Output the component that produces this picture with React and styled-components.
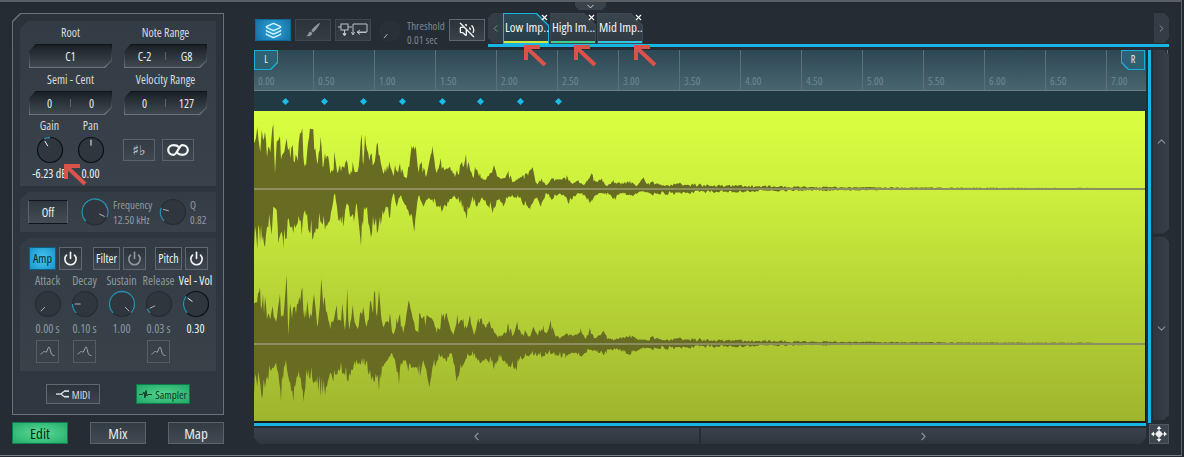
import React from "react";
import styled, { createGlobalStyle, css } from "styled-components";
import { Power, Layers, VolumeOff, ChevronLeft, ChevronRight, ChevronUp, ChevronDown, X } from "lucide-react";

const GlobalStyle = createGlobalStyle`
  html, body { margin: 0; padding: 0; background: #24292f; }
  * { box-sizing: border-box; }
  body { font-family: "Open Sans", "Roboto", "Liberation Sans", sans-serif; font-stretch: 75%; }
`;

const chamfer = (tl, tr, br, bl) => css`
  clip-path: polygon(
    ${tl}px 0, calc(100% - ${tr}px) 0, 100% ${tr}px, 100% calc(100% - ${br}px),
    calc(100% - ${br}px) 100%, ${bl}px 100%, 0 calc(100% - ${bl}px), 0 ${tl}px
  );
`;

const Frame = styled.div`
  position: relative;
  width: 1182px;
  height: 456px;
  border-top: 2px solid #5a5f65;
  border-right: 1px solid #5a5f65;
  border-bottom: 1px solid #7a7f84;
  background: #262c34;
  padding: 11px 12px 0 12px;
  display: grid;
  grid-template-columns: 212px 915px;
  column-gap: 30px;
  overflow: hidden;
`;

/* left column */
const LeftCol = styled.div`
  display: flex;
  flex-direction: column;
  gap: 7px;
`;
const Panel = styled.div`
  position: relative;
  height: 402px;
  padding: 8px;
  background: #69727a;
  ${chamfer(8, 0, 0, 0)}
  display: flex;
  flex-direction: column;
  gap: 6px;
  &::before {
    content: "";
    position: absolute;
    inset: 1px;
    background: linear-gradient(#2b323a, #2f3740);
    ${chamfer(8, 0, 0, 0)}
  }
  & > * { position: relative; }
`;
const Section = styled.div`
  height: ${(p) => p.$h}px;
  background: linear-gradient(#333b44, #39424a);
  ${chamfer(8, 0, 0, 0)}
`;
const TopSection = styled(Section)`
  padding: 5px 9px 0;
  display: grid;
  grid-template-columns: 83px 83px;
  column-gap: 12px;
  align-content: start;
`;
const Field = styled.div`
  display: flex;
  flex-direction: column;
  align-items: center;
  margin-bottom: 5px;
`;
const Label = styled.div`
  font-size: 12px;
  line-height: 14px;
  height: 16px;
  white-space: nowrap;
  color: ${(p) => (p.$bright ? "#eef2f4" : p.$dim ? "#8d989f" : "#d5dbde")};
`;
const ValueBox = styled.div`
  position: relative;
  width: 83px;
  height: 24px;
  margin-top: 2px;
  background: linear-gradient(#0e1216, #6d767d);
  ${chamfer(7, 0, 7, 0)}
  &::before {
    content: "";
    position: absolute;
    inset: 1px;
    background: linear-gradient(#1a2027, #3f4850);
    ${chamfer(7, 0, 7, 0)}
  }
`;
const ValueRow = styled.div`
  position: relative;
  height: 100%;
  display: flex;
  align-items: center;
  color: #e6eaec;
  font-size: 12px;
  & > span { flex: 1; text-align: center; }
  & > i { width: 1px; height: 8px; background: #5a646c; }
`;
const KnobRow = styled.div`
  display: grid;
  grid-template-columns: 41px 41px 83px;
  grid-column: 1 / 3;
  margin-top: -1px;
`;
const KnobCell = styled.div`
  display: flex;
  flex-direction: column;
  align-items: center;
`;
const KnobValue = styled(Label)`
  margin-top: 2px;
`;
const KeyButtons = styled.div`
  grid-column: 3;
  margin-left: 12px;
  padding-top: 20px;
  display: flex;
  gap: 7px;
`;
const KeyButton = styled.button`
  width: 38px;
  height: 22px;
  padding: 0;
  border: 1px solid #59636b;
  background: linear-gradient(#333b43, #3e474f);
  color: #c9d0d4;
  font-size: 14px;
  display: flex;
  align-items: center;
  justify-content: center;
  font-family: "DejaVu Sans", sans-serif;
`;

const FilterSection = styled(Section)`
  padding: 8px 8px;
  display: flex;
  align-items: center;
`;
const OffButton = styled.button`
  flex: none;
  width: 40px;
  height: 24px;
  padding: 0;
  border: 1px solid #59636b;
  border-top-color: #101418;
  border-bottom-color: #101418;
  background: linear-gradient(#2f363e, #444d55);
  color: #eef1f3;
  font: inherit;
  font-size: 12px;
`;
const FilterKnob = styled.div`
  flex: none;
  margin-left: ${(p) => p.$ml}px;
`;
const ParamText = styled.div`
  flex: none;
  width: ${(p) => p.$w}px;
  margin-left: ${(p) => p.$ml}px;
  font-size: 11px;
  line-height: 15px;
  color: #8f9aa1;
  white-space: nowrap;
`;

const EnvSection = styled(Section)`
  padding: 9px 9px 0;
  background: linear-gradient(#333c45, #394249);
`;
const ToggleRow = styled.div`
  display: flex;
  margin-bottom: 4px;
`;
const ToggleGroup = styled.div`
  display: flex;
  gap: 3px;
  margin-right: ${(p) => p.$gap || 0}px;
`;
const Toggle = styled.button`
  width: 27px;
  height: 23px;
  padding: 0;
  font: inherit;
  font-size: 12px;
  border: 1px solid ${(p) => (p.$on ? "#0f5f86" : "#5d6870")};
  color: ${(p) => (p.$on ? "#06222c" : "#eef1f3")};
  background: ${(p) =>
    p.$on ? "radial-gradient(circle, #46c8ee, #1a93cd)" : "linear-gradient(#2a3138, #3f4851)"};
`;
const PowerToggle = styled.button`
  width: 23px;
  height: 23px;
  padding: 0;
  display: flex;
  align-items: center;
  justify-content: center;
  border: 1px solid #5d6870;
  background: linear-gradient(#2c333a, #3e4750);
  color: ${(p) => (p.$off ? "#8d989f" : "#f1f4f5")};
`;
const EnvGrid = styled.div`
  display: grid;
  grid-template-columns: repeat(5, 37px);
  justify-items: center;
`;
const EnvColumn = styled.div`
  width: 37px;
  display: flex;
  flex-direction: column;
  align-items: center;
`;
const EnvLabel = styled(Label)`
  height: 15px;
`;
const EnvValue = styled(Label)`
  margin-top: 3px;
  height: 15px;
`;
const CurveButton = styled.div`
  width: 23px;
  height: 23px;
  margin-top: 3px;
  border: 1px solid #525d65;
  display: flex;
  align-items: center;
  justify-content: center;
  visibility: ${(p) => (p.$hidden ? "hidden" : "visible")};
`;
const ModeRow = styled.div`
  display: flex;
  justify-content: center;
  gap: 36px;
  margin-top: 7px;
`;
const ModeButton = styled.button`
  width: 54px;
  height: 20px;
  padding: 0;
  font: inherit;
  font-size: 11px;
  display: flex;
  align-items: center;
  justify-content: center;
  gap: 3px;
  border: 1px solid ${(p) => (p.$on ? "#0d7a4a" : "#5d6870")};
  color: ${(p) => (p.$on ? "#0d3a24" : "#d5dbde")};
  background: ${(p) =>
    p.$on ? "radial-gradient(ellipse, #53d58f, #21a868)" : "linear-gradient(#2c333a, #3b444c)"};
`;
const PageTabs = styled.div`
  display: flex;
  justify-content: space-between;
`;
const PageTab = styled.button`
  width: 56px;
  height: 22px;
  padding: 0;
  font: inherit;
  font-size: 15px;
  border: 1px solid ${(p) => (p.$on ? "#0f7a4c" : "#59636b")};
  color: ${(p) => (p.$on ? "#062a18" : "#e6eaec")};
  background: ${(p) =>
    p.$on ? "radial-gradient(ellipse, #5edb96, #22ac6b)" : "linear-gradient(#333b43, #414a52)"};
`;

/* right column */
const RightCol = styled.div`
  display: flex;
  flex-direction: column;
`;
const TopRow = styled.div`
  display: flex;
  height: 34px;
`;
const Tools = styled.div`
  flex: none;
  width: 234px;
  padding: 6px 0 0 1px;
  display: flex;
  align-items: flex-start;
  gap: 4px;
`;
const ToolButton = styled.button`
  flex: none;
  width: 36px;
  height: 22px;
  padding: 0;
  display: flex;
  align-items: center;
  justify-content: center;
  border: 1px solid ${(p) => (p.$on ? "#0f6a96" : "#3f4850")};
  background: ${(p) =>
    p.$on ? "radial-gradient(circle, #2ba8dc, #1a6fa5)" : "linear-gradient(#2c333a, #343c44)"};
  color: ${(p) => (p.$on ? "#d8f4ff" : "#c9d0d4")};
`;
const MuteButton = styled(ToolButton)`
  border-color: #5d6870;
  background: linear-gradient(#2b3239, #39424a);
`;
const ThresholdKnob = styled.div`
  margin-left: 3px;
`;
const Threshold = styled.div`
  flex: none;
  width: 38px;
  margin-left: 1px;
  font-size: 11px;
  line-height: 14px;
  color: #7c868d;
  white-space: nowrap;
`;
const TabStrip = styled.div`
  flex: 1;
  height: 34px;
  display: flex;
  border-bottom: 3px solid #17b5e3;
`;
const TabArrow = styled.div`
  width: 15px;
  height: 30px;
  display: flex;
  align-items: center;
  justify-content: center;
  color: #8d969d;
  background: #343c45;
  ${(p) => (p.$right ? chamfer(0, 5, 5, 0) : chamfer(5, 0, 0, 5))}
`;
const TabSlot = styled.div`
  position: relative;
  width: 46px;
  height: 31px;
  margin-right: 1px;
`;
const Tab = styled.div`
  position: relative;
  height: 100%;
  background: ${(p) => (p.$on ? "#18b4df" : "#3d4952")};
  ${chamfer(0, 12, 0, 0)}
  &::before {
    content: "";
    position: absolute;
    inset: 1px;
    background: linear-gradient(${(p) => (p.$on ? "#2d4a58, #263e4a" : "#39444d, #2f3a43")});
    ${chamfer(0, 12, 0, 0)}
  }
`;
const TabName = styled.span`
  position: absolute;
  left: 2px;
  top: 7px;
  font-size: 13px;
  line-height: 15px;
  color: #f3f6f7;
  white-space: nowrap;
`;
const TabStripe = styled.i`
  position: absolute;
  left: 1px;
  right: 1px;
  bottom: 1px;
  height: 2px;
  background: ${(p) => p.$color};
`;
const TabClose = styled.span`
  position: absolute;
  top: 0;
  right: 0;
  width: 9px;
  height: 9px;
  display: flex;
  align-items: center;
  justify-content: center;
  color: #fff;
`;
const Spacer = styled.div`
  flex: 1;
`;

const Editor = styled.div`
  margin-top: 3px;
  display: grid;
  grid-template-columns: 892px 23px;
  grid-template-rows: 373px 21px;
`;
const Viewport = styled.div`
  position: relative;
  display: flex;
  flex-direction: column;
  height: 373px;
  background: #141a18;
`;
const Ruler = styled.div`
  height: 41px;
  display: flex;
  background: linear-gradient(#2d4854, #486570);
  border-bottom: 1px solid #6f7c84;
`;
const RulerCell = styled.div`
  width: ${(p) => p.$w}px;
  flex: none;
  border-right: 1px solid #5d7079;
  padding: 25px 0 0 4px;
  font-size: 11px;
  line-height: 12px;
  color: #6f8791;
`;
const Handle = styled.div`
  position: absolute;
  top: 0;
  ${(p) => (p.$right ? "right: 1px;" : "left: 0;")}
  width: 24px;
  height: 20px;
  background: #17b0dc;
  ${(p) => (p.$right ? chamfer(0, 0, 0, 7) : chamfer(0, 0, 7, 0))}
  &::before {
    content: "${(p) => p.$text}";
    position: absolute;
    inset: 1px;
    background: #2e6172;
    color: #e4eef2;
    font-size: 10px;
    line-height: 17px;
    text-align: center;
    ${(p) => (p.$right ? chamfer(0, 0, 0, 7) : chamfer(0, 0, 7, 0))}
  }
`;
const Markers = styled.div`
  position: relative;
  height: 20px;
  background: #203943;
  display: flex;
  padding-left: 29px;
  align-items: center;
`;
const Marker = styled.i`
  width: 5px;
  height: 5px;
  margin-right: ${(p) => p.$gap}px;
  background: #19bde8;
  transform: rotate(45deg);
`;
const Wave = styled.div`
  height: 310px;
  width: 891px;
  background: linear-gradient(#d9ff40, #cdf03d 25%, #bcdb38 51%, #9fb52e);
`;
const WaveSvg = styled.svg`
  display: block;
`;
const SideBars = styled.div`
  display: flex;
  gap: 2px;
  padding-left: 2px;
  height: 376px;
`;
const CyanV = styled.div`
  width: 3px;
  height: 373px;
  background: #17b5e3;
`;
const VScrolls = styled.div`
  width: 16px;
  display: flex;
  flex-direction: column;
  gap: 3px;
  height: 370px;
`;
const VScroll = styled.div`
  flex: 1;
  display: flex;
  align-items: center;
  justify-content: center;
  color: #8a939a;
  background: linear-gradient(90deg, #2f363e, #363e47);
  ${chamfer(0, 5, 5, 0)}
`;
const CyanH = styled.div`
  height: 3px;
  background: #17b5e3;
  margin-bottom: 2px;
`;
const HScrolls = styled.div`
  display: flex;
  gap: 2px;
`;
const HScroll = styled.div`
  flex: 1;
  height: 16px;
  display: flex;
  align-items: center;
  justify-content: center;
  color: #8a939a;
  background: linear-gradient(#3a434c, #2e353d);
  ${(p) => (p.$right ? chamfer(0, 0, 6, 0) : chamfer(0, 0, 0, 6))}
`;
const MoveBox = styled.div`
  width: 20px;
  height: 20px;
  margin: 1px 0 0 3px;
  background: #3d464e;
  border: 1px solid #4f5860;
  display: flex;
  align-items: center;
  justify-content: center;
`;

const Expander = styled.div`
  position: absolute;
  top: 0;
  left: 575px;
  width: 31px;
  height: 8px;
  display: flex;
  align-items: center;
  justify-content: center;
  color: #dfe4e7;
  background: #3a434b;
  ${chamfer(0, 0, 4, 4)}
`;
const Annotations = styled.svg`
  position: absolute;
  left: 0;
  top: -2px;
  pointer-events: none;
`;

const polar = (cx, cy, r, deg) => {
  const a = ((deg - 90) * Math.PI) / 180;
  return [cx + r * Math.cos(a), cy + r * Math.sin(a)];
};

function Knob({ size = 30, r = 12.5, angle, from, to, bright, dark }) {
  const c = size / 2;
  const [x1, y1] = polar(c, c, r * 0.35, angle);
  const [x2, y2] = polar(c, c, r * 0.82, angle);
  let arc = null;
  if (from !== undefined) {
    const [ax, ay] = polar(c, c, r, from);
    const [bx, by] = polar(c, c, r, to);
    arc = `M${ax} ${ay}A${r} ${r} 0 ${to - from > 180 ? 1 : 0} 1 ${bx} ${by}`;
  }
  return (
    <svg width={size} height={size} style={{ display: "block" }}>
      <circle cx={c} cy={c} r={r} fill={dark ? "#2a3037" : "#2f363d"} stroke={bright ? "#0c0f12" : "#262c32"} strokeWidth="1.2" />
      {arc && <path d={arc} fill="none" stroke="#2a8fae" strokeWidth="1.3" />}
      <line x1={x1} y1={y1} x2={x2} y2={y2} stroke={bright ? "#f0f4f5" : "#a9b1b6"} strokeWidth="1" />
    </svg>
  );
}

const CurveIcon = () => (
  <svg width="15" height="11" viewBox="0 0 15 11" fill="none" stroke="#aab2b7" strokeWidth="0.9">
    <path d="M0.5 8C2 8 3 5.5 4.5 5.5C5.5 5.5 6 7 6.5 6C7.5 4 8 1 9 1C10 1 10.5 6 11.5 8C12.5 9.5 13.5 9.5 14.5 9.5" />
  </svg>
);
const MidiIcon = () => (
  <svg width="13" height="8" viewBox="0 0 13 8" fill="#e2e6e8">
    <rect x="0" y="3.4" width="5" height="1.3" />
    <path d="M4.5 3.6L7.5 1L8.3 1.9L5.3 4.5ZM5.2 3.6L8.3 6.1L7.5 7L4.5 4.5Z" />
    <rect x="8" y="0.3" width="5" height="1.6" />
    <rect x="8" y="5.9" width="5" height="1.6" />
  </svg>
);
const SamplerIcon = () => (
  <svg width="13" height="9" viewBox="0 0 13 9" fill="none" stroke="#0d3a24" strokeWidth="1">
    <path d="M0 4.5H3.5L5 2L6 8L7 0.5L8 6L9 4.5H13" />
  </svg>
);
const BrushIcon = () => (
  <svg width="16" height="16" viewBox="0 0 16 16" fill="#8f979c">
    <path d="M14.5 1C11.5 2.5 8 6 6.2 8.6L8.2 10.4C10.8 8 13.6 4.5 15 1.5Z" />
    <path d="M5.4 9.4C3.6 9.8 3.6 11.5 3 12.6C2.6 13.4 1.8 13.8 1 14C3.4 14.8 6.8 14 7.4 11.2Z" />
  </svg>
);
const RoutingIcon = () => (
  <svg width="32" height="16" viewBox="0 0 32 16" fill="none" stroke="#bcc3c8" strokeWidth="1">
    <rect x="4" y="2" width="7" height="6" />
    <path d="M1 5H4M11 5H15M7.5 8V12" />
    <path d="M6 11.5L7.5 14L9 11.5Z" fill="#bcc3c8" />
    <path d="M16 2H30V10H20" />
    <path d="M16 2V12" />
    <path d="M14.5 10L16 13L17.5 10" />
    <path d="M23 8L20 10.2L23 12.5M20 10.5H29" />
  </svg>
);
const MoveIcon = () => (
  <svg width="16" height="16" viewBox="0 0 16 16" fill="#f0f2f3">
    <path d="M8 0L10.4 3H5.6ZM8 16L5.6 13H10.4ZM0 8L3 5.6V10.4ZM16 8L13 10.4V5.6Z" />
    <circle cx="8" cy="8" r="3" />
    <path d="M3 7.4H13V8.6H3ZM7.4 3H8.6V13H7.4Z" />
  </svg>
);

const peaks = [
  {
    oy: 110, center: 236,
    top: [[12,100],[22,50],[35,60],[45,65],[55,110],[70,42],[75,190],[80,95],[90,78],[100,130],[110,85],[118,110],[128,105],[140,140],[150,70],[157,55],[165,160],[180,55],[190,58],[200,150],[212,80],[220,170],[225,130],[235,140],[245,180],[253,125],[262,190],[270,165],[280,170],[290,150],[300,195],[308,155],[320,185],[335,72],[340,165],[345,75],[355,130],[365,130],[383,98],[395,170],[405,175],[418,155],[428,190],[435,165],[450,160],[465,200],[475,170],[485,108],[497,108],[503,170],[515,155],[530,195],[547,108],[560,190],[572,145],[580,170],[590,175],[600,170],[612,190],[630,165],[648,132],[655,155],[668,200],[675,170],[690,190],[705,210],[732,165],[745,200],[760,205],[775,182],[790,215],[805,205],[825,190],[848,172],[860,220],[875,205],[890,225],[905,205],[930,208],[950,195],[965,220],[985,210],[1000,225],[1025,190],[1040,215],[1055,205],[1070,228],[1090,210],[1110,218],[1140,212],[1160,228],[1180,202],[1200,225]],
    bottom: [[12,415],[22,418],[30,400],[45,412],[55,350],[65,375],[70,290],[80,300],[85,400],[92,370],[100,415],[110,385],[120,350],[130,370],[140,345],[155,375],[165,300],[175,360],[187,390],[195,370],[205,355],[215,340],[225,360],[240,330],[255,250],[265,330],[280,350],[290,280],[300,320],[312,335],[320,280],[333,408],[345,300],[355,340],[363,382],[375,340],[381,370],[392,345],[405,300],[420,325],[430,250],[440,290],[450,260],[465,285],[480,320],[493,365],[505,260],[520,290],[535,265],[550,280],[575,305],[590,290],[610,260],[630,280],[650,328],[665,270],[680,290],[700,270],[728,310],[745,270],[760,290],[775,260],[800,265],[820,285],[840,298],[855,265],[872,290],[890,250],[905,270],[930,250],[955,282],[975,260],[990,250],[1020,280],[1040,255],[1060,250],[1095,270],[1110,250],[1130,255],[1150,258],[1170,245],[1200,250]],
  },
  {
    oy: 270, center: 220,
    top: [[12,100],[30,52],[45,80],[55,130],[68,108],[78,155],[90,72],[100,140],[110,14],[115,195],[120,100],[135,110],[148,80],[157,52],[165,120],[172,92],[182,130],[192,72],[203,170],[214,25],[225,90],[235,150],[250,155],[260,105],[270,150],[277,100],[285,180],[292,55],[298,180],[308,105],[320,170],[330,130],[340,110],[350,170],[360,95],[375,62],[381,140],[387,60],[395,150],[410,155],[420,130],[428,190],[440,145],[450,132],[460,190],[476,90],[490,150],[505,190],[508,128],[520,140],[530,135],[545,145],[565,175],[575,130],[590,130],[600,170],[610,195],[622,132],[632,150],[640,145],[650,175],[660,135],[672,195],[685,145],[695,145],[705,170],[718,152],[735,190],[755,195],[775,160],[790,195],[802,155],[815,195],[825,180],[840,200],[850,170],[860,190],[880,165],[890,190],[902,150],[915,195],[935,200],[950,190],[975,195],[992,175],[1005,205],[1020,173],[1035,205],[1060,182],[1075,205],[1100,205],[1140,195],[1170,208],[1200,210]],
    bottom: [[12,375],[22,350],[35,385],[45,355],[55,330],[75,285],[85,310],[93,395],[105,285],[115,320],[130,395],[140,320],[160,395],[172,320],[190,340],[212,380],[225,375],[240,310],[250,335],[270,300],[295,335],[310,295],[330,285],[345,290],[365,330],[387,360],[400,290],[420,260],[435,270],[447,345],[460,270],[475,305],[490,290],[510,320],[520,270],[538,352],[555,290],[570,260],[590,275],[605,250],[620,335],[635,295],[650,265],[665,255],[690,280],[715,275],[732,298],[750,265],[775,290],[800,302],[820,265],[850,255],[875,265],[895,250],[915,258],[947,265],[965,248],[995,260],[1020,240],[1060,255],[1095,238],[1140,255],[1170,238],[1200,235]],
  },
];

// small repeatable noise, 0..1
const noise = (x) => {
  const v = Math.sin(x * 12.9898) * 43758.5453;
  return v - Math.floor(v);
};

// wave points come from the picture up to x=650, the quiet tail is generated
function channelPoints({ oy, center, top, bottom }) {
  const mid = oy + center / 3 - 111;
  const rough = (list, seed) => {
    const out = [];
    list.forEach(([zx, zy], i) => {
      const x = zx / 3 - 4;
      const y = oy + zy / 3 - 111;
      out.push([x, y]);
      const next = list[i + 1];
      if (!next) return;
      const nx = next[0] / 3 - 4;
      const ny = oy + next[1] / 3 - 111;
      for (let sx = x + 1; sx < nx - 0.5; sx += 1) {
        const t = (sx - x) / (nx - x);
        const base = y + (ny - y) * t;
        const n = noise(sx + seed);
        out.push([sx, base + (mid - base) * 0.4 * n * n]);
      }
    });
    return out;
  };
  const tail = (sign, seed) => {
    const out = [];
    for (let x = 396; x < 840; x += 1.5) {
      const amp = 7 * Math.exp(-(x - 396) / 120) + 0.7;
      out.push([x, mid + sign * amp * (0.3 + 0.7 * noise(x + seed))]);
    }
    return out;
  };
  const upper = rough(top, 3).concat(tail(-1, 0.4));
  const lower = rough(bottom, 9).concat(tail(1, 2.1));
  return upper.concat(lower.reverse()).map((p) => `${p[0].toFixed(1)},${p[1].toFixed(1)}`).join(" ");
}

const rulerLabels = ["0.00","0.50","1.00","1.50","2.00","2.50","3.00","3.50","4.00","4.50","5.00","5.50","6.00","6.50","7.00"];
const markerGaps = [34, 34, 34, 35, 33, 35, 33, 0];

const envelope = [
  { label: "Attack", value: "0.00 s", knob: { angle: -135 }, curve: true },
  { label: "Decay", value: "0.10 s", knob: { angle: -90, from: -135, to: -90 }, curve: true },
  { label: "Sustain", value: "1.00", knob: { angle: 135, from: -135, to: 135 } },
  { label: "Release", value: "0.03 s", knob: { angle: -115, from: -135, to: -112 }, curve: true },
  { label: "Vel - Vol", value: "0.30", bright: true, knob: { angle: -55, from: -135, to: -52, bright: true } },
];

const tabs = [
  { name: "Low Imp...", color: "#cfe93a", on: true },
  { name: "High Im...", color: "#3fcf8e" },
  { name: "Mid Imp...", color: "#30c6e6" },
];

const arrows = [[66, 165], [526, 46], [576, 46], [636, 46]];

export default function App() {
  return (
    <>
      <GlobalStyle />
      <Frame>
        <LeftCol>
          <Panel>
            <TopSection $h={165}>
              <Field>
                <Label>Root</Label>
                <ValueBox><ValueRow><span>C1</span></ValueRow></ValueBox>
              </Field>
              <Field>
                <Label>Note Range</Label>
                <ValueBox><ValueRow><span>C-2</span><i /><span>G8</span></ValueRow></ValueBox>
              </Field>
              <Field>
                <Label>Semi - Cent</Label>
                <ValueBox><ValueRow><span>0</span><i /><span>0</span></ValueRow></ValueBox>
              </Field>
              <Field>
                <Label>Velocity Range</Label>
                <ValueBox><ValueRow><span>0</span><i /><span>127</span></ValueRow></ValueBox>
              </Field>
              <KnobRow>
                <KnobCell>
                  <Label>Gain</Label>
                  <Knob angle={-30} from={-28} to={0} bright />
                  <KnobValue $bright>-6.23 dB</KnobValue>
                </KnobCell>
                <KnobCell>
                  <Label>Pan</Label>
                  <Knob angle={0} bright />
                  <KnobValue $bright>0.00</KnobValue>
                </KnobCell>
                <KeyButtons>
                  <KeyButton>♯♭</KeyButton>
                  <KeyButton>
                    <svg width="22" height="12" viewBox="0 0 22 12" fill="none" stroke="#f1f4f5" strokeWidth="2.2">
                      <path d="M12 3.2C10.5 1.6 9 1.2 6.6 1.2C3.4 1.2 1.2 3.2 1.2 6C1.2 8.8 3.4 10.8 6.6 10.8C10 10.8 12 1.2 15.4 1.2C18.6 1.2 20.8 3.2 20.8 6C20.8 8.8 18.6 10.8 15.4 10.8C13 10.8 11.5 10.4 10 8.8" />
                    </svg>
                  </KeyButton>
                </KeyButtons>
              </KnobRow>
            </TopSection>
            <FilterSection $h={40}>
              <OffButton>Off</OffButton>
              <FilterKnob $ml={13}><Knob size={28} r={13} angle={115} from={-135} to={115} /></FilterKnob>
              <ParamText $ml={4} $w={38}>Frequency<br />12.50 kHz</ParamText>
              <FilterKnob $ml={8}><Knob size={28} r={12.5} angle={-75} from={-135} to={-70} /></FilterKnob>
              <ParamText $ml={3} $w={20}>Q<br />0.82</ParamText>
            </FilterSection>
            <EnvSection $h={133}>
              <ToggleRow>
                <ToggleGroup $gap={11}>
                  <Toggle $on>Amp</Toggle>
                  <PowerToggle><Power size={15} strokeWidth={2.6} /></PowerToggle>
                </ToggleGroup>
                <ToggleGroup $gap={9}>
                  <Toggle>Filter</Toggle>
                  <PowerToggle $off><Power size={15} strokeWidth={2.6} /></PowerToggle>
                </ToggleGroup>
                <ToggleGroup>
                  <Toggle>Pitch</Toggle>
                  <PowerToggle><Power size={15} strokeWidth={2.6} /></PowerToggle>
                </ToggleGroup>
              </ToggleRow>
              <EnvGrid>
                {envelope.map((e) => (
                  <EnvColumn key={e.label}>
                    <EnvLabel $dim={!e.bright} $bright={e.bright}>{e.label}</EnvLabel>
                    <Knob {...e.knob} size={30} r={12.5} />
                    <EnvValue $dim={!e.bright} $bright={e.bright}>{e.value}</EnvValue>
                    <CurveButton $hidden={!e.curve}><CurveIcon /></CurveButton>
                  </EnvColumn>
                ))}
              </EnvGrid>
            </EnvSection>
            <ModeRow>
              <ModeButton><MidiIcon /> MIDI</ModeButton>
              <ModeButton $on><SamplerIcon /> Sampler</ModeButton>
            </ModeRow>
          </Panel>
          <PageTabs>
            <PageTab $on>Edit</PageTab>
            <PageTab>Mix</PageTab>
            <PageTab>Map</PageTab>
          </PageTabs>
        </LeftCol>

        <RightCol>
          <TopRow>
            <Tools>
              <ToolButton $on><Layers size={17} strokeWidth={2} /></ToolButton>
              <ToolButton><BrushIcon /></ToolButton>
              <ToolButton><RoutingIcon /></ToolButton>
              <ThresholdKnob><Knob size={24} r={11.5} angle={-140} dark /></ThresholdKnob>
              <Threshold>Threshold<br />0.01 sec</Threshold>
              <MuteButton><VolumeOff size={16} strokeWidth={2} color="#f1f4f5" /></MuteButton>
            </Tools>
            <TabStrip>
              <TabArrow><ChevronLeft size={11} /></TabArrow>
              {tabs.map((t) => (
                <TabSlot key={t.name}>
                  <Tab $on={t.on}>
                    <TabName>{t.name}</TabName>
                    <TabStripe $color={t.color} />
                  </Tab>
                  <TabClose><X size={9} strokeWidth={3} /></TabClose>
                </TabSlot>
              ))}
              <Spacer />
              <TabArrow $right><ChevronRight size={11} /></TabArrow>
            </TabStrip>
          </TopRow>
          <Editor>
            <Viewport>
              <Ruler>
                {rulerLabels.map((l, i) => (
                  <RulerCell key={l} $w={i === 0 ? 60 : 61}>{l}</RulerCell>
                ))}
              </Ruler>
              <Handle $text="L" />
              <Handle $text="R" $right />
              <Markers>
                {markerGaps.map((g, i) => <Marker key={i} $gap={g} />)}
              </Markers>
              <Wave>
                <WaveSvg width="891" height="310" viewBox="0 0 891 310">
                  {peaks.map((ch) => (
                    <polygon key={ch.oy} points={channelPoints(ch)} fill="#676c22" />
                  ))}
                  <rect x="0" y="77" width="891" height="2" fill="#8b8f60" />
                  <rect x="0" y="232" width="891" height="2" fill="#8b8f60" />
                </WaveSvg>
              </Wave>
            </Viewport>
            <SideBars>
              <CyanV />
              <VScrolls>
                <VScroll><ChevronUp size={13} /></VScroll>
                <VScroll><ChevronDown size={13} /></VScroll>
              </VScrolls>
            </SideBars>
            <div>
              <CyanH />
              <HScrolls>
                <HScroll><ChevronLeft size={13} /></HScroll>
                <HScroll $right><ChevronRight size={13} /></HScroll>
              </HScrolls>
            </div>
            <MoveBox><MoveIcon /></MoveBox>
          </Editor>
        </RightCol>

        <Expander><ChevronDown size={11} /></Expander>
        <Annotations width="1182" height="457" fill="none" stroke="#d9534a" strokeWidth="4">
          {arrows.map(([x, y]) => (
            <path key={x} d={`M${x} ${y + 1}L${x + 19} ${y + 19}M${x - 2} ${y + 1}H${x + 14}M${x} ${y - 1}V${y + 14}`} />
          ))}
        </Annotations>
      </Frame>
    </>
  );
}
